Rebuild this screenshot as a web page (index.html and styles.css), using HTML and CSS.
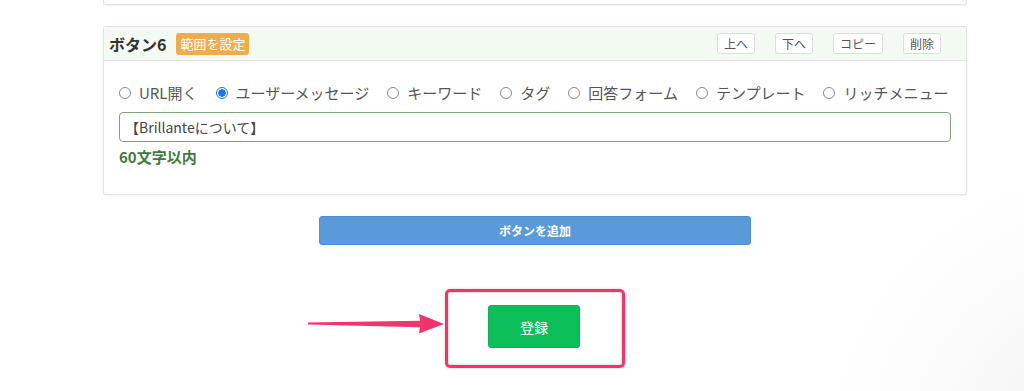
FILE: index.html
```html
<!DOCTYPE html>
<html lang="ja">
<head>
    <meta charset="UTF-8">
    <meta name="viewport" content="width=device-width, initial-scale=1.0">
    <title>ボタン設定</title>
    <link rel="stylesheet" href="styles.css">
</head>

<body>
    <div class="page">
        <!-- previous button card (cut off) -->
        <div class="card card-prev"></div>

        <!-- Button 6 -->
        <div class="card">
            <div class="card-head">
                <div class="head-left">
                    <span class="card-title">ボタン6</span>
                    <span class="badge">範囲を設定</span>
                </div>
                <div class="head-right">
                    <button class="mini-btn">上へ</button>
                    <button class="mini-btn">下へ</button>
                    <button class="mini-btn">コピー</button>
                    <button class="mini-btn">削除</button>
                </div>
            </div>
            <div class="card-body">
                <div class="radio-row">
                    <label class="radio"><input type="radio" name="type6"> URL開く</label>
                    <label class="radio"><input type="radio" name="type6" checked> ユーザーメッセージ</label>
                    <label class="radio"><input type="radio" name="type6"> キーワード</label>
                    <label class="radio"><input type="radio" name="type6"> タグ</label>
                    <label class="radio"><input type="radio" name="type6"> 回答フォーム</label>
                    <label class="radio"><input type="radio" name="type6"> テンプレート</label>
                    <label class="radio"><input type="radio" name="type6"> リッチメニュー</label>
                </div>
                <input type="text" class="text-input" value="【Brillanteについて】">
                <div class="hint">60文字以内</div>
            </div>
        </div>

        <div class="add-wrap">
            <button class="add-btn">ボタンを追加</button>
        </div>

        <div class="submit-wrap">
            <div class="highlight">
                <!-- annotation arrow -->
                <svg class="arrow" width="136" height="20" viewBox="0 0 136 20">
                    <polygon points="0,8.6 112,6.8 111,0 136,10 111,19.5 112,13.2 0,10.4" fill="#f2346d"/>
                </svg>
                <button class="submit-btn">登録</button>
            </div>
        </div>
    </div>
</body>
</html>
```

FILE: styles.css
```css
body {
    margin: 0;
    padding: 0;
    font-family: "Noto Sans CJK JP", "Noto Sans", sans-serif;
    color: #333;
    background: radial-gradient(circle at 1130px 470px, #f4f4f4 0, #f8f8f8 170px, #fdfdfd 250px, #fff 320px);
    height: 391px;
    overflow: hidden;
}
.page {
    margin-left: 103px;
    width: 864px;
}
.card {
    background-color: #fff;
    border: 1px solid #e3e3e3;
    border-radius: 3px;
    box-shadow: 0 1px 2px rgba(0, 0, 0, 0.06);
}
.card-prev {
    height: 4px;
    border-top: none;
    border-radius: 0 0 3px 3px;
    margin-bottom: 21px;
}
.card-head {
    display: flex;
    justify-content: space-between;
    align-items: center;
    height: 33px;
    padding: 0 25px 0 5px;
    background-color: #f3faf1;
    border-bottom: 1px solid #e3e3e3;
}
.head-left {
    display: flex;
    align-items: center;
    gap: 10px;
}
.card-title {
    font-size: 16px;
    font-weight: bold;
    color: #333;
}
.badge {
    background-color: #f0ab4a;
    color: #fff;
    font-size: 13px;
    line-height: 22px;
    padding: 0 4px;
    border-radius: 3px;
}
.head-right {
    display: flex;
    align-items: center;
    gap: 20px;
}
.mini-btn {
    font-family: inherit;
    font-size: 12px;
    color: #555;
    background-color: #fff;
    border: 1px solid #ddd;
    border-radius: 3px;
    height: 21px;
    padding: 0 6px;
    line-height: 19px;
}
.card-body {
    padding: 20px 15px 26px 15px;
}
.radio-row {
    display: flex;
    gap: 18px;
    height: 24px;
    margin-bottom: 7px;
}
.radio {
    display: flex;
    align-items: center;
    gap: 8px;
    font-size: 15px;
    color: #555;
    line-height: 24px;
    white-space: nowrap;
}
.radio input {
    appearance: none;
    width: 12px;
    height: 12px;
    margin: 0;
    border: 1px solid #888;
    border-radius: 50%;
    background: #fff;
}
.radio input:checked {
    border-color: #1a73e8;
    background: radial-gradient(circle, #1a73e8 0, #1a73e8 3.5px, #fff 4px);
}
.text-input {
    display: block;
    box-sizing: border-box;
    width: 832px;
    height: 30px;
    padding: 0 5px;
    font-family: inherit;
    font-size: 14px;
    color: #444;
    border: 1px solid #7da67d;
    border-radius: 4px;
    outline: none;
}
.hint {
    margin-top: 4px;
    font-size: 15px;
    font-weight: bold;
    color: #3e7c3e;
    line-height: 22px;
}
.add-wrap {
    display: flex;
    justify-content: center;
    margin-top: 21px;
}
.add-btn {
    width: 432px;
    height: 29px;
    font-family: inherit;
    font-size: 12px;
    font-weight: bold;
    color: #fff;
    background-color: #5a9ad9;
    border: 1px solid #4f8fcf;
    border-radius: 3px;
}
.submit-wrap {
    display: flex;
    justify-content: center;
    margin-top: 44px;
}
.highlight {
    position: relative;
    padding: 13px 42px 17px 40px;
    border: 3px solid #f2346d;
    border-radius: 5px;
    box-shadow: inset 0 0 3px rgba(0, 0, 0, 0.25), 0 0 3px rgba(0, 0, 0, 0.2);
}
.arrow {
    position: absolute;
    left: -140px;
    top: 22px;
}
.submit-btn {
    display: block;
    width: 92px;
    height: 43px;
    font-family: inherit;
    font-size: 14px;
    color: #fff;
    background-color: #0cbf5a;
    border: 1px solid #0bb254;
    border-radius: 3px;
}
```
